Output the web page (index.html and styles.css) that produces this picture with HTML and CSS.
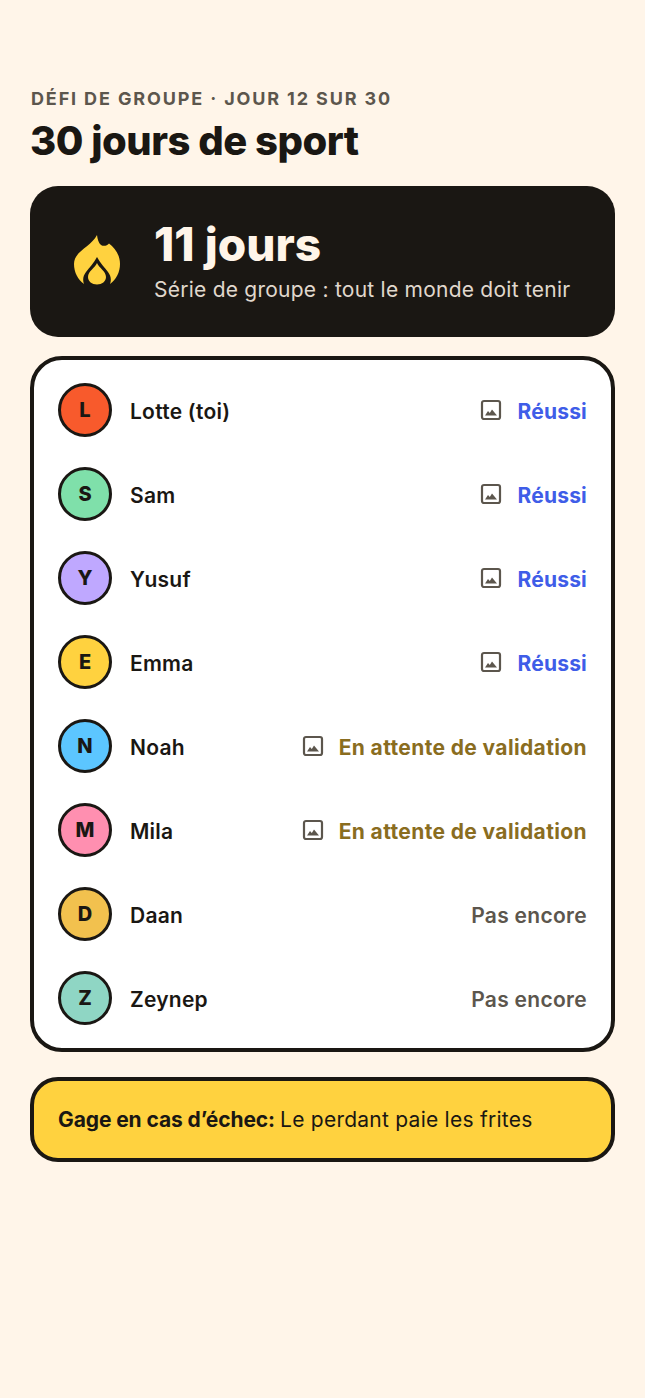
FILE: index.html
```html
<!doctype html>
<html lang="fr">
<head>
    <meta charset="UTF-8">
    <meta name="viewport" content="width=device-width, initial-scale=1.0">
    <title>30 jours de sport</title>
    <link rel="stylesheet" href="styles.css">
</head>
<body>
<div class="app">
    <p class="eyebrow">DÉFI DE GROUPE · JOUR 12 SUR 30</p>
    <h1 class="title">30 jours de sport</h1>

    <div class="streak">
        <svg class="flame" width="46" height="50" viewBox="0 0 46 50">
            <path fill="#ffd23f" d="M23 0C23.500 4 24.500 8 27 10C29.500 11.500 33 11 35 8.500C41 13 46 20 46 29C46 37.500 42 44.500 36 49C37.500 45 37 41 34 37C31 33 26 28 23 22C20 28 15 33 12 37C9 41 8.500 45 10 49C4 44.500 0 37.500 0 29C0 16 17 12 23 0z"/>
            <path fill="#ffd23f" d="M23 28C25 33 32 36 32 42C32 46.500 28 49.500 23 49.500C18 49.500 14 46.500 14 42C14 36 21 33 23 28z"/>
        </svg>
        <div>
            <div class="streak-count">11 jours</div>
            <div class="streak-label">Série de groupe : tout le monde doit tenir</div>
        </div>
    </div>

    <ul class="members">
        <li class="member">
            <span class="avatar red">L</span><span class="name">Lotte (toi)</span>
            <svg class="photo" viewBox="0 0 22 22"><use href="#photo-icon"/></svg><span class="status done">Réussi</span>
        </li>
        <li class="member">
            <span class="avatar green">S</span><span class="name">Sam</span>
            <svg class="photo" viewBox="0 0 22 22"><use href="#photo-icon"/></svg><span class="status done">Réussi</span>
        </li>
        <li class="member">
            <span class="avatar purple">Y</span><span class="name">Yusuf</span>
            <svg class="photo" viewBox="0 0 22 22"><use href="#photo-icon"/></svg><span class="status done">Réussi</span>
        </li>
        <li class="member">
            <span class="avatar yellow">E</span><span class="name">Emma</span>
            <svg class="photo" viewBox="0 0 22 22"><use href="#photo-icon"/></svg><span class="status done">Réussi</span>
        </li>
        <li class="member">
            <span class="avatar blue">N</span><span class="name">Noah</span>
            <svg class="photo" viewBox="0 0 22 22"><use href="#photo-icon"/></svg><span class="status waiting">En attente de validation</span>
        </li>
        <li class="member">
            <span class="avatar pink">M</span><span class="name">Mila</span>
            <svg class="photo" viewBox="0 0 22 22"><use href="#photo-icon"/></svg><span class="status waiting">En attente de validation</span>
        </li>
        <li class="member">
            <span class="avatar gold">D</span><span class="name">Daan</span>
            <span class="status">Pas encore</span>
        </li>
        <li class="member">
            <span class="avatar teal">Z</span><span class="name">Zeynep</span>
            <span class="status">Pas encore</span>
        </li>
    </ul>

    <div class="forfeit"><b>Gage en cas d’échec:</b> <span>Le perdant paie les frites</span></div>
</div>

<svg width="0" height="0" class="defs">
    <symbol id="photo-icon" viewBox="0 0 22 22">
        <rect x="2" y="2" width="18" height="18" rx="2" fill="none" stroke="#5c564d" stroke-width="2.2"/>
        <path fill="#5c564d" d="M5 16.500l3-4.500 1.800 2 2.200-3.500 5 6z"/>
    </symbol>
</svg>
</body>
</html>
```

FILE: styles.css
```css
*{margin: 0;padding: 0;box-sizing: border-box}
body{background: #fff5e9;color: #1a1713;font-family: Inter, "Liberation Sans", sans-serif;}
.app{padding: 88px 30px 0;}
.defs{position: absolute;}

.eyebrow{font-size: 18px;line-height: 22px;font-weight: 700;letter-spacing: 1.86px;color: #5c564d;padding-left: 1px;}
.title{font-size: 40px;line-height: 48px;margin-top: 7px;font-weight: 800;letter-spacing: -.5px;}

.streak{
    display: flex;
    align-items: center;
    gap: 34px;
    height: 151px;
    margin-top: 21px;
    padding: 0 44px 3px;
    border-radius: 28px;
    background: #1a1713;
    color: #fff5e9;
}
.flame{flex: none;}
.streak-count{font-size: 46px;line-height: 54px;font-weight: 800;}
.streak-label{font-size: 21px;line-height: 28px;margin-top: 5px;letter-spacing: .24px;color: #e0d8cd;}

.members{
    margin-top: 19px;
    padding: 8px 24px;
    border: 4px solid #1a1713;
    border-radius: 32px;
    background: #fff;
    list-style: none;
}
.member{display: flex;align-items: center;height: 84px;}
.avatar{
    display: flex;
    align-items: center;
    justify-content: center;
    flex: none;
    width: 54px;
    height: 54px;
    margin-right: 18px;
    border: 3px solid #1a1713;
    border-radius: 50%;
    font-size: 20px;
    font-weight: 800;
}
.red{background: #f85a2c;}
.green{background: #7fe0aa;}
.purple{background: #bfa8ff;}
.yellow{background: #ffd23f;}
.blue{background: #5cc6ff;}
.pink{background: #ff8fb0;}
.gold{background: #f2c14e;}
.teal{background: #8fd6c4;}

.name{flex: 1;padding-top: 2px;font-size: 21px;font-weight: 600;letter-spacing: .25px;}
.photo{flex: none;width: 22px;height: 22px;margin-right: 15px;}
.status{padding-top: 2px;font-size: 21px;font-weight: 600;letter-spacing: .3px;color: #5c564d;}
.done,.waiting{font-weight: 700;}
.done{letter-spacing: .2px;color: #3f5de8;}
.waiting{letter-spacing: .37px;color: #8a6d1f;}

.forfeit{
    display: flex;
    align-items: center;
    gap: 5px;
    height: 85px;
    margin-top: 25px;
    padding: 0 24px;
    border: 4px solid #1a1713;
    border-radius: 28px;
    background: #ffd23f;
    font-size: 21px;
    letter-spacing: .25px;
}
.forfeit b{font-weight: 700;letter-spacing: -.1px;}
```
